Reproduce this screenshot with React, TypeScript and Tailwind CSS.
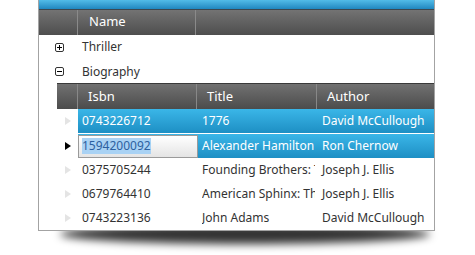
import React from "react";

const font = { fontFamily: '"Noto Sans", "Open Sans", sans-serif' };

function Tri({ dark }: { dark?: boolean }) {
  return (
    <svg width="6" height="8" viewBox="0 0 6 8">
      <path d="M0 0 L6 4 L0 8 Z" fill={dark ? "#000" : "#e4e4e4"} />
    </svg>
  );
}

function Box({ plus }: { plus?: boolean }) {
  return (
    <svg width="9" height="9" viewBox="0 0 9 9">
      <rect x="0.5" y="0.5" width="8" height="8" rx="1.5" fill="#fff" stroke="#333" />
      <path d="M2 4.5 H7" stroke="#000" />
      {plus && <path d="M4.5 2 V7" stroke="#000" />}
    </svg>
  );
}

const rows = [
  ["0375705244", "Founding Brothers: The Revolutionary Generation", "Joseph J. Ellis"],
  ["0679764410", "American Sphinx: The Character of Thomas Jefferson", "Joseph J. Ellis"],
  ["0743223136", "John Adams", "David McCullough"],
];

export default function App() {
  return (
    <div className="relative w-[475px] h-[255px] bg-white overflow-hidden text-[12px]" style={font}>
      <div className="absolute left-[60px] top-[224px] w-[370px] h-[20px] rounded-[50%] bg-black/80 blur-[4px]" />
      <div className="relative ml-[38px] w-[397px] h-[231px] bg-white border-l border-r border-b border-[#a3a3a3] flex flex-col">
        <div className="h-[9px] bg-gradient-to-b from-[#52bce8] to-[#1f87bf]" />
        <div className="h-px bg-[#3c4850]" />
        <div className="h-[25px] flex bg-gradient-to-b from-[#737373] to-[#4e4e4e] text-white text-[13px]">
          <div className="w-[39px] border-r border-[#8a8a8a]" />
          <div className="w-[118px] border-r border-[#8a8a8a] flex items-center pl-[11px]">Name</div>
          <div className="flex-1" />
        </div>
        <div className="h-[25px] flex items-center text-[#333]">
          <div className="w-[39px] flex justify-center pl-px pt-px"><Box plus /></div>
          <div className="pl-[4px] pt-px">Thriller</div>
        </div>
        <div className="h-[24px] flex items-center text-[#333]">
          <div className="w-[39px] flex justify-center pl-px pt-px"><Box /></div>
          <div className="pl-[4px] pt-px">Biography</div>
        </div>
        <div className="ml-[18px] flex flex-col">
          <div className="h-[26px] flex bg-gradient-to-b from-[#717171] to-[#4c4c4c] border-t border-[#3a3a3a] text-white text-[13px]">
            <div className="w-[21px] border-r border-[#888]" />
            <div className="w-[119px] border-r border-[#888] flex items-center pl-[10px]">Isbn</div>
            <div className="w-[120px] border-r border-[#888] flex items-center pl-[10px]">Title</div>
            <div className="flex-1 flex items-center pl-[10px]">Author</div>
          </div>
          <div className="h-[24px] flex">
            <div className="w-[21px] flex items-center justify-center"><Tri /></div>
            <div className="flex-1 flex items-center bg-gradient-to-b from-[#3ab6e8] to-[#1d8fc4] text-white">
              <div className="w-[120px] pl-[4px] whitespace-nowrap overflow-hidden">0743226712</div>
              <div className="w-[120px] pl-[4px] whitespace-nowrap overflow-hidden">1776</div>
              <div className="flex-1 pl-[4px] whitespace-nowrap overflow-hidden">David McCullough</div>
            </div>
          </div>
          <div className="h-px ml-[21px] bg-white" />
          <div className="h-[24px] flex">
            <div className="w-[21px] flex items-center justify-center"><Tri dark /></div>
            <div className="flex-1 flex items-center bg-gradient-to-b from-[#3ab6e8] to-[#1d8fc4] text-white">
              <div className="w-[120px] h-[23px] my-auto border border-[#9a9a9a] bg-gradient-to-b from-white to-[#e4e4e4] flex items-center pl-[3px]">
                <span className="bg-[#a9d2f4] text-[#2c61a0] leading-[16px]">1594200092</span>
              </div>
              <div className="w-[120px] pl-[4px] whitespace-nowrap overflow-hidden">Alexander Hamilton</div>
              <div className="flex-1 pl-[4px] whitespace-nowrap overflow-hidden">Ron Chernow</div>
            </div>
          </div>
          {rows.map((r) => (
            <div key={r[0]} className="h-[24px] flex items-center text-[#333]">
              <div className="w-[21px] flex items-center justify-center"><Tri /></div>
              <div className="w-[120px] pl-[4px] whitespace-nowrap overflow-hidden">{r[0]}</div>
              <div className="w-[120px] pl-[4px] pr-[3px]">
                <div className="whitespace-nowrap overflow-hidden">{r[1]}</div>
              </div>
              <div className="flex-1 pl-[4px] whitespace-nowrap overflow-hidden">{r[2]}</div>
            </div>
          ))}
        </div>
      </div>
    </div>
  );
}
